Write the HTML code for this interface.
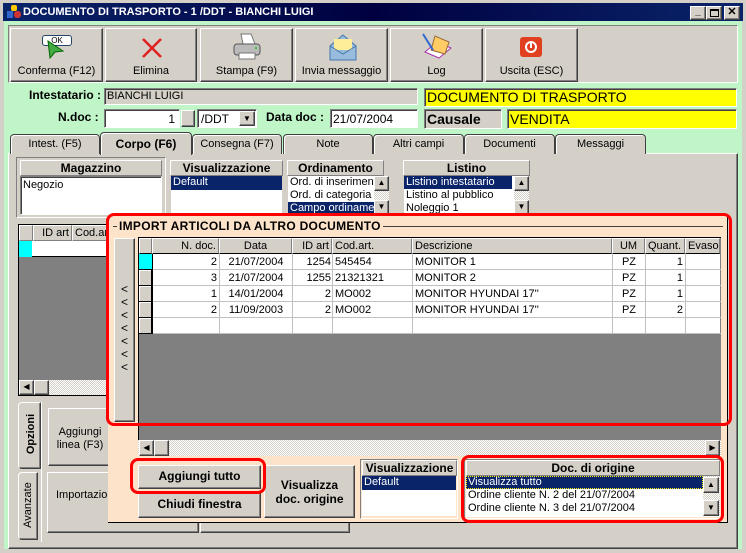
<!DOCTYPE html>
<html><head><meta charset="utf-8">
<style>
*{box-sizing:border-box;margin:0;padding:0}
body{width:746px;height:553px;overflow:hidden;background:#d4d0c8;font-family:"Liberation Sans",sans-serif;font-size:11px;color:#000;position:relative}
.a{position:absolute}
.r{border:1px solid;border-color:#fff #404040 #404040 #fff;box-shadow:inset -1px -1px #808080;background:#d4d0c8}
.s{border:1px solid;border-color:#808080 #fff #fff #808080;box-shadow:inset 1px 1px #404040}
.w{background:#fff}
.g{background:#808080}
.b{font-weight:bold}
.c{text-align:center}
.sel{background:#0a246a;color:#fff}
.tab{position:absolute;top:134px;height:20px;border:1px solid #404040;border-bottom:none;border-radius:4px 4px 0 0;background:#d4d0c8;text-align:center;line-height:18px;font-size:11px;box-shadow:inset 1px 1px #fff}
.hd{position:absolute;height:16px;border:1px solid;border-color:#fff #808080 #808080 #fff;background:#d4d0c8;line-height:14px;font-size:11px;padding:0 2px;white-space:nowrap;overflow:hidden}
.rh{position:absolute;width:14px;height:17px;background:#d4d0c8;border-bottom:1px solid #000;border-right:1px solid #000;box-shadow:inset 1px 1px #fff}
.chk{background-image:repeating-conic-gradient(#fff 0 25%,#d4d0c8 0 50%);background-size:2px 2px}
.red{position:absolute;border:3px solid #f00;border-radius:8px}
.nw{white-space:nowrap}
</style></head><body>
<!-- title -->
<div class="a" style="left:3px;top:3px;width:740px;height:18px;background:linear-gradient(90deg,#0a246a,#000040 50%,#0a246a 100%)"></div>
<div class="a" style="left:7px;top:5px;width:14px;height:14px"><div class="a" style="left:4px;top:0;width:6px;height:6px;background:#fc0;border-radius:2px"></div><div class="a" style="left:0;top:6px;width:6px;height:7px;background:#36c"></div><div class="a" style="left:7px;top:6px;width:7px;height:7px;background:#c33;border-radius:3px"></div></div>
<div class="a b" style="left:23px;top:6px;color:#fff;font-size:11px">DOCUMENTO DI TRASPORTO - 1 /DDT - BIANCHI LUIGI</div>
<div class="a r" style="left:690px;top:6px;width:16px;height:14px;font-size:10px;line-height:10px;text-align:center;font-weight:bold">_</div>
<div class="a r" style="left:706px;top:6px;width:16px;height:14px"><div class="a" style="left:3px;top:2px;width:9px;height:8px;border:1px solid #000;border-top-width:2px"></div></div>
<div class="a r" style="left:724px;top:6px;width:16px;height:14px;font-size:11px;line-height:11px;text-align:center;font-weight:bold">✕</div>
<!-- client -->
<div class="a" style="left:4px;top:21px;width:738px;height:528px;background:#c0f5c8"></div>
<div class="a" style="left:8px;top:25px;width:730px;height:58px;background:#d4d0c8;border:1px solid;border-color:#808080 #fff #fff #808080"></div>
<!-- toolbar buttons -->
<div class="a r c" style="left:10px;top:28px;width:93px;height:54px"><div class="a" style="left:31px;top:6px;width:30px;height:11px;border:1px solid #246;border-radius:3px;background:#fff;font-size:8px;line-height:9px">OK</div><svg class="a" style="left:34px;top:10px" width="22" height="20"><path d="M3 2 L18 12 L10 13 L5 19 Z" fill="#4a4" stroke="#060" stroke-width="1"/></svg><div class="a" style="left:0;width:91px;top:36px">Conferma (F12)</div></div>
<div class="a r c" style="left:105px;top:28px;width:92px;height:54px"><svg class="a" style="left:34px;top:7px" width="24" height="24"><path d="M3 3 L21 21 M21 3 L3 21" stroke="#e02020" stroke-width="2.5"/></svg><div class="a" style="left:0;width:90px;top:36px">Elimina</div></div>
<div class="a r c" style="left:200px;top:28px;width:93px;height:54px"><svg class="a" style="left:30px;top:3px" width="32" height="30"><path d="M10 2 L20 2 L24 12 L12 12 Z" fill="#fff" stroke="#777"/><rect x="3" y="12" width="26" height="11" rx="3" fill="#bbb" stroke="#555"/><rect x="8" y="21" width="16" height="6" fill="#fff" stroke="#777"/><circle cx="25" cy="16" r="1" fill="#0c0"/></svg><div class="a" style="left:0;width:91px;top:36px">Stampa (F9)</div></div>
<div class="a r c" style="left:295px;top:28px;width:93px;height:54px"><svg class="a" style="left:32px;top:3px" width="30" height="30"><path d="M2 14 L15 3 L28 14 L28 28 L2 28 Z" fill="#9bd" stroke="#47a"/><path d="M6 7 L24 7 L24 18 L6 18 Z" fill="#fe9"/><path d="M2 14 L15 22 L28 14" fill="none" stroke="#47a"/></svg><div class="a" style="left:0;width:91px;top:36px">Invia messaggio</div></div>
<div class="a r c" style="left:390px;top:28px;width:93px;height:54px"><svg class="a" style="left:30px;top:3px" width="32" height="30"><path d="M4 20 L18 26 L30 16 L16 10 Z" fill="#fff" stroke="#a3a"/><path d="M10 18 L14 4 L28 10 L24 22 Z" fill="#fc6" stroke="#963"/><path d="M2 2 L12 18" stroke="#36c" stroke-width="2"/></svg><div class="a" style="left:0;width:91px;top:36px">Log</div></div>
<div class="a r c" style="left:485px;top:28px;width:93px;height:54px"><div class="a" style="left:34px;top:8px;width:22px;height:20px;background:#e04020;border-radius:3px"><div class="a" style="left:5px;top:4px;width:12px;height:12px;border:2px solid #fff;border-radius:50%"></div><div class="a" style="left:10px;top:5px;width:2px;height:6px;background:#fff"></div></div><div class="a" style="left:0;width:91px;top:36px">Uscita (ESC)</div></div>
<!-- header fields -->
<div class="a b" style="left:29px;top:88px;font-size:12px">Intestatario :</div>
<div class="a s" style="left:104px;top:88px;width:314px;height:17px;background:#d4d0c8;padding:1px 2px;font-size:11px;line-height:13px">BIANCHI LUIGI</div>
<div class="a s" style="left:424px;top:88px;width:313px;height:19px;background:#ff0;font-size:14px;line-height:16px;padding-left:2px">DOCUMENTO DI TRASPORTO</div>
<div class="a b" style="left:58px;top:110px;font-size:12px">N.doc :</div>
<div class="a s w" style="left:104px;top:109px;width:76px;height:19px;text-align:right;padding:2px 4px;font-size:12px">1</div>
<div class="a r" style="left:181px;top:110px;width:14px;height:17px"></div>
<div class="a s w" style="left:197px;top:109px;width:60px;height:19px;padding:2px 3px;font-size:12px">/DDT</div>
<div class="a r" style="left:239px;top:111px;width:16px;height:15px;font-size:8px;text-align:center;line-height:13px">▼</div>
<div class="a b" style="left:266px;top:110px;font-size:12px">Data doc :</div>
<div class="a s w" style="left:330px;top:109px;width:88px;height:19px;padding:2px 2px;font-size:12px">21/07/2004</div>
<div class="a s b" style="left:424px;top:109px;width:78px;height:20px;background:#d4d0c8;font-size:14px;line-height:18px;padding-left:2px">Causale</div>
<div class="a s" style="left:507px;top:109px;width:230px;height:20px;background:#ff0;font-size:14px;line-height:18px;padding-left:2px">VENDITA</div>
<!-- tab panel -->
<div class="a r" style="left:8px;top:153px;width:730px;height:396px;box-shadow:inset -1px -1px #808080"></div>
<div class="tab" style="left:10px;width:90px">Intest. (F5)</div>
<div class="tab" style="left:192px;width:90px">Consegna (F7)</div>
<div class="tab" style="left:283px;width:90px">Note</div>
<div class="tab" style="left:373px;width:91px">Altri campi</div>
<div class="tab" style="left:464px;width:91px">Documenti</div>
<div class="tab" style="left:555px;width:91px">Messaggi</div>
<div class="tab b" style="left:100px;top:132px;width:92px;height:23px;border-bottom:none;font-size:12px;line-height:22px">Corpo (F6)</div>
<!-- group boxes -->
<div class="a" style="left:16px;top:157px;width:150px;height:61px;border:1px solid;border-color:#808080 #fff #fff #808080"></div>
<div class="hd b c" style="left:20px;top:160px;width:142px;font-size:12px">Magazzino</div>
<div class="a s w" style="left:20px;top:176px;width:142px;height:39px;padding:2px 2px">Negozio</div>
<div class="hd b c" style="left:170px;top:160px;width:113px;font-size:12px">Visualizzazione</div>
<div class="a w" style="left:171px;top:176px;width:111px;height:40px"><div class="sel" style="height:14px;padding-left:2px">Default</div></div>
<div class="hd b c" style="left:287px;top:160px;width:97px;font-size:12px">Ordinamento</div>
<div class="a w nw" style="left:288px;top:176px;width:95px;height:40px;overflow:hidden;line-height:13px;padding-left:2px">Ord. di inserimento<br>Ord. di categoria<br><span class="sel" style="display:block;margin-left:-2px;padding-left:2px">Campo ordinamento</span></div>
<div class="a chk" style="left:374px;top:176px;width:15px;height:40px"></div>
<div class="a r" style="left:374px;top:176px;width:15px;height:15px;font-size:8px;text-align:center;line-height:12px">▲</div>
<div class="a r" style="left:374px;top:200px;width:15px;height:15px;font-size:8px;text-align:center;line-height:12px">▼</div>
<div class="hd b c" style="left:403px;top:160px;width:127px;font-size:12px">Listino</div>
<div class="a w nw" style="left:404px;top:176px;width:125px;height:40px;overflow:hidden;line-height:13px;padding-left:2px"><span class="sel" style="display:block;margin-left:-2px;padding-left:2px;width:108px">Listino intestatario</span>Listino al pubblico<br>Noleggio 1</div>
<div class="a chk" style="left:514px;top:176px;width:15px;height:40px"></div>
<div class="a r" style="left:514px;top:176px;width:15px;height:15px;font-size:8px;text-align:center;line-height:12px">▲</div>
<div class="a r" style="left:514px;top:200px;width:15px;height:15px;font-size:8px;text-align:center;line-height:12px">▼</div>
<!-- left grid -->
<div class="a g" style="left:18px;top:224px;width:100px;height:172px;border:1px solid #000"></div>
<div class="hd" style="left:19px;top:225px;width:14px"></div>
<div class="hd" style="left:33px;top:225px;width:39px;text-align:right">ID art</div>
<div class="hd" style="left:72px;top:225px;width:40px">Cod.ar</div>
<div class="a" style="left:19px;top:241px;width:13px;height:16px;background:#0ff"></div>
<div class="a w" style="left:32px;top:241px;width:80px;height:16px;border-bottom:1px solid #000"></div>
<div class="a chk" style="left:19px;top:380px;width:98px;height:15px"></div>
<div class="a r" style="left:19px;top:380px;width:15px;height:15px;font-size:8px;line-height:12px;text-align:center">◀</div>
<div class="a r" style="left:34px;top:380px;width:15px;height:15px"></div>
<!-- side tabs -->
<div class="a r b" style="left:18px;top:402px;width:23px;height:67px;border-radius:4px 0 0 4px"><div class="a" style="left:-18px;top:25px;width:60px;transform:rotate(-90deg);text-align:center;font-size:11px">Opzioni</div></div>
<div class="a r" style="left:18px;top:472px;width:20px;height:68px;border-radius:4px 0 0 4px"><div class="a" style="left:-21px;top:26px;width:60px;transform:rotate(-90deg);text-align:center">Avanzate</div></div>
<div class="a" style="left:41px;top:402px;width:70px;height:140px;border-left:1px solid #fff"></div>
<div class="a r c" style="left:48px;top:408px;width:64px;height:58px;padding-top:17px;line-height:13px">Aggiungi<br>linea (F3)</div>
<div class="a r c" style="left:47px;top:472px;width:152px;height:61px;padding-top:16px;padding-left:8px;line-height:13px;text-align:left">Importazione<br>&nbsp;&nbsp;&nbsp;&nbsp;&nbsp;&nbsp;&nbsp;&nbsp;&nbsp;&nbsp;&nbsp;&nbsp;&nbsp;&nbsp;&nbsp;&nbsp;&nbsp;(M</div>
<div class="a r" style="left:200px;top:520px;width:150px;height:13px"></div>
<!-- import dialog -->
<div class="a" style="left:108px;top:216px;width:620px;height:307px;background:#fde3ca;border-right:1px solid #000;border-bottom:1px solid #000"></div>
<div class="a" style="left:113px;top:226px;width:610px;height:1px;background:#404040"></div>
<div class="a b" style="left:117px;top:219px;background:#fde3ca;padding:0 2px;font-size:12px;letter-spacing:.3px">IMPORT ARTICOLI DA ALTRO DOCUMENTO</div>
<div class="a r" style="left:114px;top:238px;width:21px;height:184px"><div class="a c" style="left:0;top:44px;width:19px;line-height:13px;font-size:12px">&lt;<br>&lt;<br>&lt;<br>&lt;<br>&lt;<br>&lt;<br>&lt;</div></div>
<!-- grid -->
<div class="a g" style="left:138px;top:237px;width:583px;height:203px;border-left:1px solid #000;border-top:1px solid #000"></div>
<div class="hd" style="left:139px;top:238px;width:13px;border-bottom:1px solid #000"></div>
<div class="hd" style="left:152px;top:238px;width:67px;text-align:right;border-bottom:1px solid #000">N. doc.</div>
<div class="hd c" style="left:219px;top:238px;width:73px;border-bottom:1px solid #000">Data</div>
<div class="hd" style="left:292px;top:238px;width:40px;text-align:right;border-bottom:1px solid #000">ID art</div>
<div class="hd" style="left:332px;top:238px;width:80px;border-bottom:1px solid #000">Cod.art.</div>
<div class="hd" style="left:412px;top:238px;width:200px;border-bottom:1px solid #000">Descrizione</div>
<div class="hd c" style="left:612px;top:238px;width:33px;border-bottom:1px solid #000">UM</div>
<div class="hd" style="left:645px;top:238px;width:40px;border-bottom:1px solid #000">Quant.</div>
<div class="hd" style="left:685px;top:238px;width:35px;border-bottom:1px solid #000">Evaso</div>
<div class="a" style="left:139px;top:254px;width:13px;height:16px;background:#0ff;border-bottom:1px solid #000"></div>
<div class="rh" style="left:139px;top:270px;width:13px;height:16px"></div>
<div class="rh" style="left:139px;top:286px;width:13px;height:16px"></div>
<div class="rh" style="left:139px;top:302px;width:13px;height:16px"></div>
<div class="rh" style="left:139px;top:318px;width:13px;height:16px"></div>
<div class="a" style="left:152px;top:254px;width:568px;height:80px;background:#fff;border-left:1px solid #000;border-bottom:1px solid #000;line-height:16px;font-size:11px">
<div style="position:absolute;left:0;top:0;width:568px;height:80px;background:repeating-linear-gradient(180deg,transparent 0 15px,#c0c0c0 15px 16px)"></div>
<div style="position:absolute;left:66px;top:0;width:1px;height:80px;background:#c0c0c0"></div>
<div style="position:absolute;left:139px;top:0;width:1px;height:80px;background:#c0c0c0"></div>
<div style="position:absolute;left:179px;top:0;width:1px;height:80px;background:#c0c0c0"></div>
<div style="position:absolute;left:259px;top:0;width:1px;height:80px;background:#c0c0c0"></div>
<div style="position:absolute;left:459px;top:0;width:1px;height:80px;background:#c0c0c0"></div>
<div style="position:absolute;left:492px;top:0;width:1px;height:80px;background:#c0c0c0"></div>
<div style="position:absolute;left:532px;top:0;width:1px;height:80px;background:#c0c0c0"></div>
<div style="position:absolute;left:0;top:0;width:64px;text-align:right">2<br>3<br>1<br>2</div>
<div style="position:absolute;left:67px;top:0;width:72px;text-align:center">21/07/2004<br>21/07/2004<br>14/01/2004<br>11/09/2003</div>
<div style="position:absolute;left:140px;top:0;width:38px;text-align:right">1254<br>1255<br>2<br>2</div>
<div style="position:absolute;left:182px;top:0">545454<br>21321321<br>MO002<br>MO002</div>
<div style="position:absolute;left:262px;top:0">MONITOR 1<br>MONITOR 2<br>MONITOR HYUNDAI 17''<br>MONITOR HYUNDAI 17''</div>
<div style="position:absolute;left:460px;top:0;width:32px;text-align:center">PZ<br>PZ<br>PZ<br>PZ</div>
<div style="position:absolute;left:493px;top:0;width:37px;text-align:right">1<br>1<br>1<br>2</div>
</div>
<div class="a chk" style="left:138px;top:440px;width:583px;height:16px"></div>
<div class="a r" style="left:139px;top:440px;width:15px;height:16px;font-size:8px;line-height:13px;text-align:center">◀</div>
<div class="a r" style="left:154px;top:440px;width:15px;height:16px"></div>
<div class="a r" style="left:705px;top:440px;width:15px;height:16px;font-size:8px;line-height:13px;text-align:center">▶</div>
<div class="red" style="left:106px;top:213px;width:626px;height:213px"></div>
<!-- dialog buttons -->
<div class="a r b c" style="left:138px;top:465px;width:123px;height:24px;font-size:12px;line-height:21px">Aggiungi tutto</div>
<div class="a r b c" style="left:138px;top:491px;width:123px;height:27px;font-size:12px;line-height:25px">Chiudi finestra</div>
<div class="a r b c" style="left:264px;top:465px;width:91px;height:53px;font-size:12px;line-height:14px;padding-top:12px">Visualizza<br>doc. origine</div>
<div class="red" style="left:130px;top:458px;width:136px;height:36px"></div>
<div class="a" style="left:360px;top:459px;width:98px;height:60px;border:1px solid;border-color:#808080 #fff #fff #808080"></div>
<div class="hd b c" style="left:362px;top:460px;width:95px;font-size:12px">Visualizzazione</div>
<div class="a w" style="left:362px;top:476px;width:94px;height:40px"><div class="sel" style="height:14px;padding-left:2px">Default</div></div>
<div class="a" style="left:464px;top:459px;width:258px;height:60px;border:1px solid;border-color:#808080 #fff #fff #808080"></div>
<div class="hd b c" style="left:466px;top:460px;width:254px;font-size:12px">Doc. di origine</div>
<div class="a w nw" style="left:466px;top:476px;width:254px;height:41px;line-height:13px;font-size:11px"><div class="sel" style="width:237px;padding-left:2px;outline:1px dotted #ff0;outline-offset:-1px">Visualizza tutto</div><div style="padding-left:2px">Ordine cliente N. 2 del 21/07/2004<br>Ordine cliente N. 3 del 21/07/2004</div></div>
<div class="a chk" style="left:703px;top:476px;width:17px;height:40px"></div>
<div class="a r" style="left:703px;top:477px;width:16px;height:16px;font-size:8px;text-align:center;line-height:13px">▲</div>
<div class="a r" style="left:703px;top:500px;width:16px;height:16px;font-size:8px;text-align:center;line-height:13px">▼</div>
<div class="red" style="left:461px;top:455px;width:263px;height:68px"></div>
</body></html>
